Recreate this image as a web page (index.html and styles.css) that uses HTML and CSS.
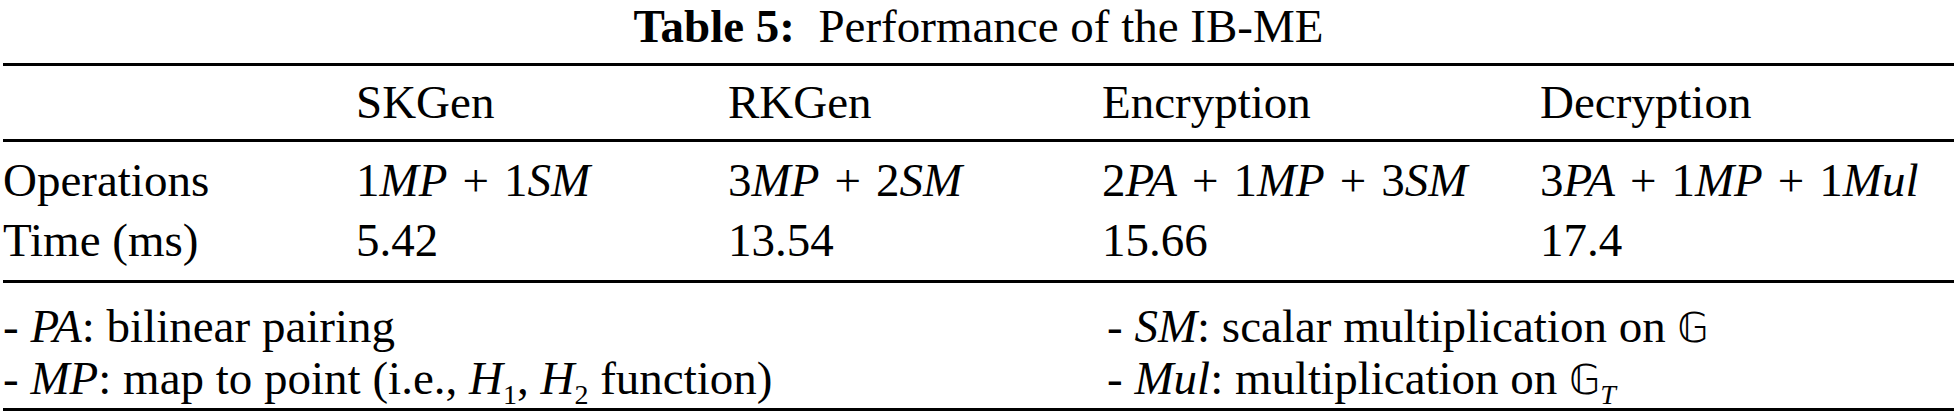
FILE: index.html
```html
<!DOCTYPE html>
<html>
<head>
<meta charset="utf-8">
<link rel="stylesheet" href="styles.css">
</head>
<body>
<div class="wrap">
  <div class="caption"><span class="cap-label">Table 5:</span>&nbsp;&nbsp;Performance of the IB-ME</div>
  <table class="perf">
    <colgroup>
      <col class="c1"><col class="c2"><col class="c3"><col class="c4"><col class="c5">
    </colgroup>
    <thead>
      <tr class="head-row">
        <th></th><th>SKGen</th><th>RKGen</th><th>Encryption</th><th>Decryption</th>
      </tr>
    </thead>
    <tbody>
      <tr class="first-row">
        <td>Operations</td>
        <td>1<i>MP</i><span class="op">+</span>1<i>SM</i></td>
        <td>3<i>MP</i><span class="op">+</span>2<i>SM</i></td>
        <td>2<i>PA</i><span class="op">+</span>1<i>MP</i><span class="op">+</span>3<i>SM</i></td>
        <td>3<i>PA</i><span class="op">+</span>1<i>MP</i><span class="op">+</span>1<i>Mul</i></td>
      </tr>
      <tr class="last-row">
        <td>Time (ms)</td><td>5.42</td><td>13.54</td><td>15.66</td><td>17.4</td>
      </tr>
    </tbody>
    <tfoot>
      <tr class="note-row first-note">
        <td colspan="3">- <i>PA</i>: bilinear pairing</td>
        <td colspan="2" class="note-right">- <i>SM</i>: scalar multiplication on <span class="bb">𝔾</span></td>
      </tr>
      <tr class="note-row last-note">
        <td colspan="3">- <i>MP</i>: map to point (i.e., <i>H</i><sub>1</sub>, <i>H</i><sub>2</sub> function)</td>
        <td colspan="2" class="note-right">- <i>Mul</i>: multiplication on <span class="bb">𝔾</span><sub><i>T</i></sub></td>
      </tr>
    </tfoot>
  </table>
</div>
</body>
</html>
```

FILE: styles.css
```css
html, body {
  margin: 0;
  padding: 0;
  background: #fff;
}
body, table, th, td, i, sub {
  font-family: "Liberation Serif", "Tinos", "DejaVu Serif", serif;
}
body {
  color: #000;
  font-size: 47px;
}
table {
  font-size: 47px;
}
.wrap {
  padding-left: 3px;
}
.caption {
  text-align: center;
  height: 63px;
  line-height: 52px;
}
.cap-label {
  font-weight: bold;
}
.perf {
  width: 1951px;
  border-collapse: separate;
  border-spacing: 0;
  table-layout: fixed;
}
.c1 { width: 353px; }
.c2 { width: 372px; }
.c3 { width: 374px; }
.c4 { width: 438px; }
.c5 { width: 414px; }
.perf th, .perf td {
  text-align: left;
  font-weight: normal;
  padding: 0;
  white-space: nowrap;
  vertical-align: top;
}
.head-row th {
  border-top: 3px solid #000;
  border-bottom: 3px solid #000;
  line-height: 73px;
}
.first-row td {
  padding-top: 8px;
  line-height: 60px;
}
.last-row td {
  line-height: 60px;
  padding-bottom: 10px;
  border-bottom: 3px solid #000;
}
.note-row td {
  line-height: 52px;
}
.first-note td {
  padding-top: 17px;
}
.last-note td {
  padding-bottom: 4px;
  border-bottom: 3px solid #000;
}
.note-right {
  padding-left: 5px !important;
}
.op {
  margin: 0 15px;
}
.bb {
  font-family: "DejaVu Sans", sans-serif;
  font-size: 40px;
  line-height: 0;
}
sub {
  font-size: 28px;
  line-height: 0;
}
```
